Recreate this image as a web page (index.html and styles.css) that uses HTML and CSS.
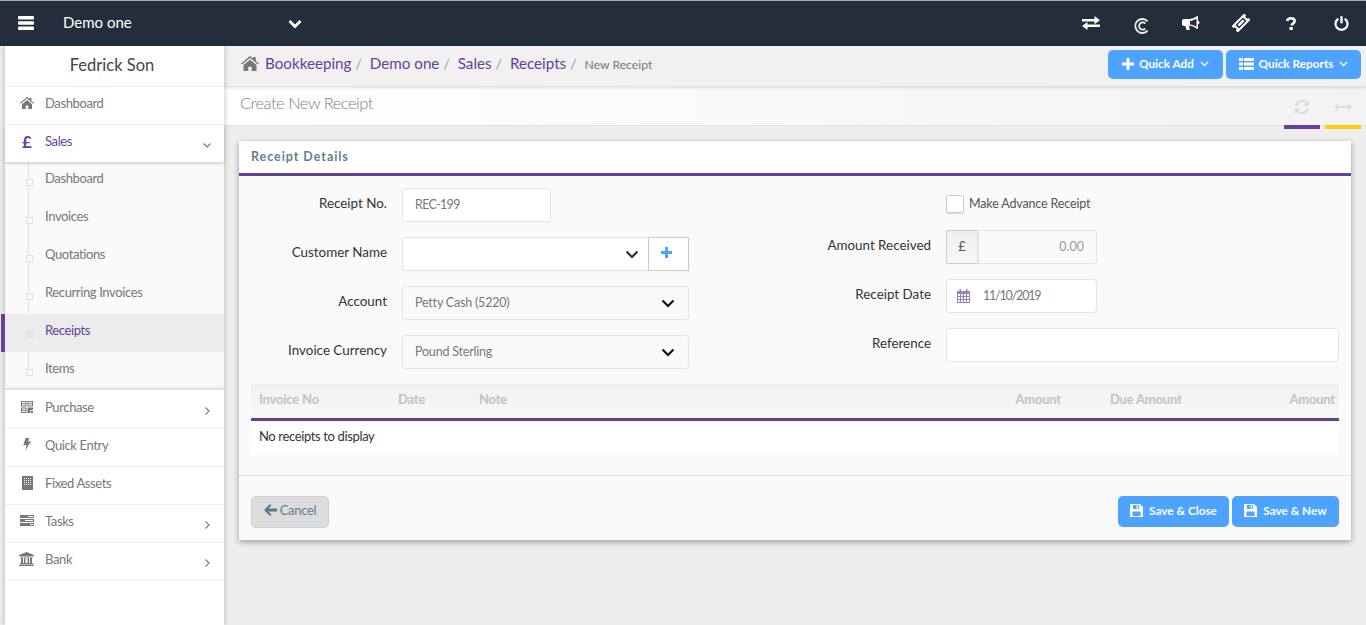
FILE: index.html
```html
<!DOCTYPE html>
<html lang="en">
<head>
<meta charset="utf-8">
<title>Create New Receipt</title>
<link rel="stylesheet" href="styles.css">
</head>
<body>
<header class="topbar">
  <button class="burger" aria-label="Menu"><svg width="16" height="14" viewBox="0 0 16 14"><path d="M1 0h14a1 1 0 0 1 1 1v1.500a1 1 0 0 1-1 1H1a1 1 0 0 1-1-1V1a1 1 0 0 1 1-1zM1 5.300h14a1 1 0 0 1 1 1v1.400a1 1 0 0 1-1 1H1a1 1 0 0 1-1-1V6.300a1 1 0 0 1 1-1zM1 10.500h14a1 1 0 0 1 1 1V13a1 1 0 0 1-1 1H1a1 1 0 0 1-1-1v-1.500a1 1 0 0 1 1-1z" fill="#fff"/></svg></button>
  <div class="company">Demo one</div>
  <svg class="company-caret" width="14" height="10" viewBox="0 0 14 10"><path d="M1.500 2l5.500 5.500L12.500 2" fill="none" stroke="#fff" stroke-width="2.800"/></svg>
  <nav class="top-icons">
    <span class="top-icon"><svg width="18" height="14" viewBox="0 0 18 14"><path d="M0 3h12.500V0L18 4.200l-5.500 4V5.500H0zM18 8.500H5.500V6L0 10l5.500 4v-3H18z" fill="#fff"/></svg></span>
    <span class="top-icon top-icon-c"><svg width="16" height="16" viewBox="0 0 16 16"><path d="M13.600 3.400A7 7 0 1 0 13.600 12.600M11.300 5.500A3.600 3.600 0 1 0 11.300 10.500" fill="none" stroke="#eee" stroke-width="1.800"/></svg></span>
    <span class="top-icon"><svg width="18" height="15" viewBox="0 0 18 15"><path d="M15 0l1 .5v4.300c1 .3 1.500.9 1.500 1.700s-.5 1.400-1.500 1.700v4.300l-1 .5c-2.500-2-5-3.200-8-3.500L7.800 14H4.500L3.400 10H2C.8 10 0 9.200 0 8V5c0-1.200.8-2 2-2h5c3 0 5.800-1 8-3zM14.500 2.500C12.800 3.800 10.500 4.700 8 5v3.500c2.500.3 4.800 1.200 6.500 2.500z" fill="#fff" fill-rule="evenodd"/></svg></span>
    <span class="top-icon"><svg width="18" height="18" viewBox="-11 -11 22 22"><g transform="rotate(-45)"><path d="M-11-5.500H11V-2.200a2.200 2.200 0 0 0 0 4.400V5.500H-11V2.200a2.200 2.200 0 0 0 0-4.400zM-6.500-3V3H6.500V-3z" fill="#fff" fill-rule="evenodd"/><path d="M-4.500-1.500H4.500V1.500H-4.500z" fill="#fff"/></g></svg></span>
    <span class="top-icon"><svg width="10" height="13" viewBox="0 0 10 13"><path d="M1.200 4C1.400 2.300 2.900 1.300 5 1.300c2.200 0 3.700 1.100 3.700 2.800 0 2.600-3 2.400-3 4.300" fill="none" stroke="#fff" stroke-width="2.500"/><rect x="3.500" y="10" width="3.200" height="3" fill="#fff"/></svg></span>
    <span class="top-icon"><svg width="15" height="15" viewBox="0 0 15 15"><path d="M4.300 2.800a6 6 0 1 0 6.400 0" fill="none" stroke="#fff" stroke-width="2.200"/><rect x="6.300" y="0" width="2.400" height="7.500" rx="1" fill="#fff"/></svg></span>
  </nav>
</header>

<div class="layout">
  <aside class="sidebar">
    <div class="user">Fedrick Son</div>
    <a class="nav-item">
      <svg class="nav-icon" width="16" height="16" viewBox="-1 -2 16 16"><path d="M7 0l2.500 2.100V.8h1.900v2.900L14 6l-.7.8L7 1.600.7 6.800 0 6zM2 7.200L7 3l5 4.200V12H8.300V8.500H5.700V12H2z" fill="#777"/></svg>
      <span>Dashboard</span>
    </a>
    <a class="nav-item nav-open">
      <span class="nav-icon pound">£</span>
      <span>Sales</span>
      <svg class="nav-caret" width="10" height="7" viewBox="0 0 10 7"><path d="M1.500 1.500L5 5l3.500-3.500" fill="none" stroke="#777" stroke-width="1.100"/></svg>
    </a>
    <div class="subnav">
      <a class="sub-item">Dashboard</a>
      <a class="sub-item">Invoices</a>
      <a class="sub-item">Quotations</a>
      <a class="sub-item">Recurring Invoices</a>
      <a class="sub-item sub-active">Receipts</a>
      <a class="sub-item">Items</a>
    </div>
    <a class="nav-item">
      <svg class="nav-icon" width="16" height="16" viewBox="-2 -2 16 16"><path d="M0 0h5.500v5.500H0zM1 1v1.300h3.500V1zM1 3.200v1.300h3.500V3.200zM6.500 0H12v5.500H6.500zM7.500 1v1.300H11V1zM7.500 3.200v1.300H11V3.200zM0 6.500h5.500V12H0zM1 7.500v1.300h3.500V7.500zM1 9.700V11h3.500V9.700zM6.500 6.500H12V9H9.500v3h-3zM10 10h2v2h-2z" fill="#777" fill-rule="evenodd"/></svg>
      <span>Purchase</span>
      <svg class="nav-caret" width="7" height="10" viewBox="0 0 7 10"><path d="M1.500 1.500L5 5 1.500 8.500" fill="none" stroke="#777" stroke-width="1.100"/></svg>
    </a>
    <a class="nav-item">
      <svg class="nav-icon" width="16" height="16" viewBox="-4 -1 16 16"><path d="M2.500 0h3.800L4.800 3.800 8 3 2.200 13l1.300-6.200L.3 7.500z" fill="#777"/></svg>
      <span>Quick Entry</span>
    </a>
    <a class="nav-item">
      <svg class="nav-icon" width="16" height="16" viewBox="-3 -1 16 16"><path d="M0 0h11v14H0zM2 2v1h1V2zM4 2v1h1V2zM6 2v1h1V2zM8 2v1h1V2zM2 4v1h1V4zM4 4v1h1V4zM6 4v1h1V4zM8 4v1h1V4zM2 6v1h1V6zM4 6v1h1V6zM6 6v1h1V6zM8 6v1h1V6zM2 8v1h1V8zM4 8v1h1V8zM6 8v1h1V8zM8 8v1h1V8z" fill="#777" fill-rule="evenodd"/></svg>
      <span>Fixed Assets</span>
    </a>
    <a class="nav-item">
      <svg class="nav-icon" width="16" height="16" viewBox="-1 -2 16 16"><path d="M0 0h14v3H0zM8 1v1h5V1zM0 4h14v3H0zM5 5v1h8V5zM0 8h14v3H0zM10 9v1h3V9z" fill="#777" fill-rule="evenodd"/></svg>
      <span>Tasks</span>
      <svg class="nav-caret" width="7" height="10" viewBox="0 0 7 10"><path d="M1.500 1.500L5 5 1.500 8.500" fill="none" stroke="#777" stroke-width="1.100"/></svg>
    </a>
    <a class="nav-item">
      <svg class="nav-icon" width="16" height="16" viewBox="0 -1 16 16"><path d="M7.500 0L15 3v1H0V3zM1 4.500h13v1H1zM2 6h2v5H2zM5 6h1.500v5H5zM8.500 6H10v5H8.500zM11 6h2v5h-2zM1 11h13v1.200H1zM0 12.700h15V14H0z" fill="#777"/></svg>
      <span>Bank</span>
      <svg class="nav-caret" width="7" height="10" viewBox="0 0 7 10"><path d="M1.500 1.500L5 5 1.500 8.500" fill="none" stroke="#777" stroke-width="1.100"/></svg>
    </a>
  </aside>

  <main class="content">
    <div class="crumbbar">
      <nav class="crumbs">
        <svg class="crumb-home" width="18" height="15" viewBox="0 0 18 15"><path d="M9 0l3.200 2.700V1h2.500v3.800L18 7.600l-.9 1L9 1.900.9 8.600 0 7.600zM2.500 9L9 3.700 15.500 9v6h-4.800v-4.300H7.300V15H2.500z" fill="#777"/></svg>
        <a class="crumb">Bookkeeping</a><span class="sep">/</span>
        <a class="crumb">Demo one</a><span class="sep">/</span>
        <a class="crumb">Sales</a><span class="sep">/</span>
        <a class="crumb">Receipts</a><span class="sep">/</span>
        <span class="crumb-now">New Receipt</span>
      </nav>
      <div class="quick">
        <button class="btn btn-quick-add">
          <svg width="12" height="12" viewBox="0 0 12 12"><path d="M4.500 0h3v4.500H12v3H7.500V12h-3V7.500H0v-3h4.500z" fill="#fff"/></svg>
          Quick Add
          <svg class="btn-caret" width="9" height="6" viewBox="0 0 9 6"><path d="M1 1l3.500 3.500L8 1" fill="none" stroke="#fff" stroke-width="1.300"/></svg>
        </button>
        <button class="btn btn-quick-rep">
          <svg width="15" height="12" viewBox="0 0 15 12"><path d="M0 0h4v3H0zM5 0h10v3H5zM0 4.500h4v3H0zM5 4.500h10v3H5zM0 9h4v3H0zM5 9h10v3H5z" fill="#fff"/></svg>
          Quick Reports
          <svg class="btn-caret" width="9" height="6" viewBox="0 0 9 6"><path d="M1 1l3.500 3.500L8 1" fill="none" stroke="#fff" stroke-width="1.300"/></svg>
        </button>
      </div>
    </div>

    <div class="titlebar">
      <h1 class="title">Create New Receipt</h1>
      <div class="title-tools">
        <span class="tool tool-purple"><svg width="18" height="18" viewBox="0 0 16 16"><path d="M2 7A6 6 0 0 1 12.500 3.500L14.500 1.500V7H9l2-2A3.800 3.800 0 0 0 4.300 7zM14 9A6 6 0 0 1 3.500 12.500L1.500 14.500V9H7L5 11A3.800 3.800 0 0 0 11.700 9z" fill="#ddd"/></svg></span>
        <span class="tool tool-yellow"><svg width="18" height="8" viewBox="0 0 18 8"><path d="M4 0v3h10V0l4 4-4 4V5H4v3L0 4z" fill="#ddd"/></svg></span>
      </div>
    </div>

    <section class="card">
      <h2 class="card-head">Receipt Details</h2>
      <div class="card-body">
        <form class="form">
          <div class="col col-left">
            <div class="row">
              <label class="label">Receipt No.</label>
              <input class="input input-short" value="REC-199">
            </div>
            <div class="row">
              <label class="label">Customer Name</label>
              <div class="combo">
                <div class="select select-white">
                  <svg class="sel-caret sel-caret-dark" width="14" height="9" viewBox="0 0 14 9"><path d="M1.500 1.500L7 7l5.500-5.500" fill="none" stroke="#333" stroke-width="2.200"/></svg>
                </div>
                <button type="button" class="add-btn" aria-label="Add"><svg width="11" height="11" viewBox="0 0 11 11"><path d="M4 0h3v4h4v3H7v4H4V7H0V4h4z" fill="#4da3ff"/></svg></button>
              </div>
            </div>
            <div class="row">
              <label class="label">Account</label>
              <div class="select">Petty Cash (5220)
                <svg class="sel-caret" width="14" height="9" viewBox="0 0 14 9"><path d="M1.500 1.500L7 7l5.500-5.500" fill="none" stroke="#111" stroke-width="2.200"/></svg>
              </div>
            </div>
            <div class="row">
              <label class="label">Invoice Currency</label>
              <div class="select">Pound Sterling
                <svg class="sel-caret" width="14" height="9" viewBox="0 0 14 9"><path d="M1.500 1.500L7 7l5.500-5.500" fill="none" stroke="#111" stroke-width="2.200"/></svg>
              </div>
            </div>
          </div>
          <div class="col col-right">
            <div class="row row-check">
              <span class="label"></span>
              <span class="checkbox"></span>
              <span class="check-text">Make Advance Receipt</span>
            </div>
            <div class="row">
              <label class="label">Amount Received</label>
              <span class="addon">£</span>
              <input class="input input-amount" value="0.00">
            </div>
            <div class="row">
              <label class="label">Receipt Date</label>
              <div class="date">
                <svg width="13" height="14" viewBox="0 0 13 14"><path d="M0 2h2.500V0h1.500v2h5V0h1.500v2H13v12H0zM1 5v2h2V5zM4 5v2h2V5zM7 5v2h2V5zM10 5v2h2V5zM1 8v2h2V8zM4 8v2h2V8zM7 8v2h2V8zM10 8v2h2V8zM1 11v2h2v-2zM4 11v2h2v-2zM7 11v2h2v-2zM10 11v2h2v-2z" fill="#9b83bd" fill-rule="evenodd"/></svg>
                <span class="date-text">11/10/2019</span>
              </div>
            </div>
            <div class="row">
              <label class="label">Reference</label>
              <input class="input input-wide">
            </div>
          </div>
        </form>

        <table class="table">
          <thead>
            <tr>
              <th class="c-no">Invoice No</th>
              <th class="c-date">Date</th>
              <th class="c-note">Note</th>
              <th class="c-amt">Amount</th>
              <th class="c-due">Due Amount</th>
              <th class="c-pay">Amount</th>
            </tr>
          </thead>
          <tbody>
            <tr><td colspan="6">No receipts to display</td></tr>
          </tbody>
        </table>
      </div>
      <div class="card-foot">
        <button class="btn-cancel">
          <svg width="13" height="12" viewBox="0 0 13 12"><path d="M6 0l1.500 1.500L4.500 4.500H13v3H4.500l3 3L6 12 0 6z" fill="#5b7a8c"/></svg>
          Cancel
        </button>
        <div class="foot-right">
          <button class="btn btn-close">
            <svg width="13" height="13" viewBox="0 0 13 13"><path d="M0 0h10l3 3v10H0zM3 1v4h6V1zM2.500 7.500V12h8V7.500zM6.500 1.500h1.500v3H6.500z" fill="#fff" fill-rule="evenodd"/></svg>
            Save &amp; Close
          </button>
          <button class="btn btn-new">
            <svg width="13" height="13" viewBox="0 0 13 13"><path d="M0 0h10l3 3v10H0zM3 1v4h6V1zM2.500 7.500V12h8V7.500zM6.500 1.500h1.500v3H6.500z" fill="#fff" fill-rule="evenodd"/></svg>
            Save &amp; New
          </button>
        </div>
      </div>
    </section>
  </main>
</div>
</body>
</html>
```

FILE: styles.css
```css
* { box-sizing: border-box; }
html, body { margin: 0; height: 625px; overflow: hidden; }
body {
  background: #eeeeee;
  font-family: "Lato", "Noto Sans", sans-serif;
  font-size: 13px;
  color: #333;
}
button { font-family: inherit; cursor: pointer; }

/* top bar */
.topbar {
  height: 46px;
  background: #232d3b;
  border-top: 1px solid #a9a9a9;
  display: flex;
  align-items: center;
  color: #fff;
}
.burger {
  width: 16px; height: 14px; padding: 0; margin: 0 0 1px 18px;
  background: none; border: 0; display: flex;
}
.company { margin-left: 29px; width: 225px; font-size: 15px; padding-bottom: 3px; }
.company-caret { margin-bottom: -1px; }
.top-icons { margin-left: auto; display: flex; }
.top-icon { width: 50px; height: 46px; display: flex; align-items: center; justify-content: center; padding-bottom: 1px; }
.top-icon-c { padding: 5px 0 0 2px; }

/* layout */
.layout { display: flex; height: 579px; }
.sidebar {
  width: 219px;
  margin-left: 5px;
  background: #fff;
  box-shadow: 0 0 6px rgba(0,0,0,.25);
  position: relative;
  z-index: 2;
  flex: none;
}
.user {
  height: 41px;
  border-bottom: 1px solid #f0f0f0;
  text-align: center;
  font-size: 16.500px;
  line-height: 38px;
  color: #444;
  padding-right: 5px;
}
.nav-item {
  height: 38px;
  border-bottom: 1px solid #f0f0f0;
  display: flex;
  align-items: center;
  color: #777;
  position: relative;
  padding: 0 0 5px 14px;
  line-height: 1;
  letter-spacing: -.38px;
}
.nav-icon { flex: none; width: 16px; margin-right: 10px; text-align: center; }
.pound { font-size: 17px; font-weight: 700; color: #663f9a; letter-spacing: 0; }
.nav-open { color: #663f9a; border-bottom: 0; box-shadow: 0 2px 3px rgba(0,0,0,.15); z-index: 1; height: 37px; }
.nav-caret { position: absolute; right: 13px; top: 15px; }
.nav-open .nav-caret { right: 12px; top: 17px; }
.subnav { background: #fafafa; position: relative; margin-bottom: 1px; box-shadow: inset 0 -3px 3px -1px rgba(0,0,0,.12); }
.subnav::before {
  content: ""; position: absolute; left: 23px; top: 0; bottom: 20px; width: 1px; background: #e3e3e3;
}
.sub-item {
  display: block;
  height: 38px;
  padding-left: 40px;
  line-height: 32px;
  color: #777;
  position: relative;
  letter-spacing: -.38px;
}
.sub-item::before {
  content: ""; position: absolute; left: 21px; top: 17px; width: 5px; height: 5px;
  background: #fafafa; border: 1px solid #e0e0e0;
}
.sub-active { background: #ececec; color: #663f9a; }
.sub-active::before { background: #e3e3e3; }
.sub-active::after {
  content: ""; position: absolute; left: -4px; top: 0; bottom: 0; width: 4px; background: #663f9a;
}

/* content */
.content { flex: 1; min-width: 0; }
.crumbbar {
  height: 40px;
  background: #f1f1f1;
  box-shadow: 0 1px 4px rgba(0,0,0,.18);
  display: flex;
  align-items: flex-start;
  justify-content: space-between;
  padding: 4px 5px 0 17px;
  position: relative;
  z-index: 1;
}
.crumbs { display: flex; align-items: center; height: 26px; }
.crumb-home { margin-right: 6px; margin-top: 1px; }
.crumb { font-size: 15.200px; color: #663f9a; }
.sep { color: #999; margin: 0 8px 0 4px; font-size: 14px; }
.crumb-now { font-size: 12.200px; color: #777; padding-top: 2px; }
.quick { display: flex; gap: 3px; }
.btn {
  background: #4da3ff;
  border: 0;
  border-radius: 5px;
  color: #fff;
  font-size: 11.800px;
  font-weight: 700;
  display: flex;
  align-items: center;
  justify-content: center;
  gap: 5px;
  padding: 0 0 2px;
}
.btn-quick-add { width: 115px; height: 29px; }
.btn-quick-rep { width: 135px; height: 29px; }
.btn-caret { margin-left: 1px; }

.titlebar {
  height: 40px;
  background: linear-gradient(90deg, #fff, #f3f3f3);
  border-bottom: 1px solid #e3e3e3;
  display: flex;
  justify-content: space-between;
  padding-left: 16px;
}
.title { margin: 0; font-size: 16.500px; font-weight: 300; color: #808080; line-height: 34px; letter-spacing: -.5px; }
.title-tools { display: flex; gap: 5px; padding-right: 5px; }
.tool {
  width: 36px; height: 43px; display: flex; align-items: center; justify-content: center;
  border-bottom: 4px solid;
}
.tool svg { margin-top: 2px; }
.tool-purple { border-color: #663f9a; }
.tool-yellow { border-color: #ffce0a; }

/* card */
.card {
  margin: 15px 15px 0 15px;
  width: 1112px;
  height: 399px;
  background: #fafafa;
  box-shadow: 0 2px 6px rgba(0,0,0,.35);
}
.card-head {
  margin: 0;
  height: 35px;
  background: #fff;
  border-bottom: 3px solid #663f9a;
  font-size: 12.500px;
  font-weight: 700;
  letter-spacing: .95px;
  color: #5f7f90;
  padding-left: 12px;
  line-height: 32px;
}
.card-body { height: 300px; border-bottom: 1px solid #e3e3e3; padding: 0 12px; }
.form { display: flex; height: 208px; margin-left: -12px; }
.col { display: flex; flex-direction: column; gap: 15px; }
.col-left { width: 450px; padding-top: 12px; }
.col-right { margin-left: 92px; padding-top: 5px; flex: 1; }
.row { display: flex; align-items: center; height: 34px; }
.row-check { padding-top: 12px; }
.label {
  flex: none;
  width: 148px;
  margin-right: 15px;
  text-align: right;
  color: #333;
  font-size: 13.400px;
  padding-bottom: 4px;
}
.col-right .label { width: 150px; }
.input {
  height: 34px;
  border: 1px solid #e4e4e4;
  border-radius: 3px;
  background: #fff;
  padding: 0 12px 2px;
  font: inherit;
  font-size: 12.500px;
  color: #777;
  outline: 0;
}
.input-short { width: 149px; letter-spacing: -.7px; }
.input-amount { width: 119px; border-radius: 0 3px 3px 0; text-align: right; background: #fafafa; color: #999; }
.input-wide { width: 393px; }
.combo { display: flex; width: 287px; }
.select {
  flex: 1;
  height: 34px;
  width: 287px;
  border: 1px solid #e4e4e4;
  border-radius: 3px;
  background: #fafafa;
  padding: 0 12px 2px;
  color: #777;
  font-size: 12.500px;
  letter-spacing: -.2px;
  display: flex;
  align-items: center;
  position: relative;
}
.select-white { background: #fff; border-radius: 3px 0 0 3px; border-right: 0; }
.sel-caret { position: absolute; right: 13px; top: 12px; }
.sel-caret-dark { right: 9px; }
.add-btn {
  width: 41px; height: 34px; padding: 0 4px 3px 0; background: #fff; border: 1px solid #c9c9c9;
  display: flex; align-items: center; justify-content: center;
}
.checkbox {
  width: 18px; height: 18px; border: 1px solid #ccc; border-radius: 2px; background: #fff;
  box-shadow: 0 1px 1px rgba(0,0,0,.12); margin-right: 5px; flex: none;
}
.check-text { padding-bottom: 2px; color: #555; font-size: 12.500px; letter-spacing: -.15px; }
.addon {
  width: 32px; height: 34px; border: 1px solid #ccc; background: linear-gradient(#efefef,#f7f7f7);
  display: flex; align-items: center; justify-content: center; color: #555; padding-bottom: 3px; flex: none;
  border-right-color: #e4e4e4; border-radius: 3px 0 0 3px;
}
.date {
  width: 151px; height: 34px; border: 1px solid #e4e4e4; border-radius: 3px; background: #fff;
  display: flex; align-items: center; gap: 13px; padding: 0 0 0 10px; font-size: 12.500px; color: #777;
}
.date-text { letter-spacing: -1.200px; padding-bottom: 2px; }

/* table */
.table { width: 1088px; border-collapse: collapse; table-layout: fixed; }
.table th {
  height: 30px;
  background: linear-gradient(#f1f1f1, #f8f8f8);
  border-bottom: 3px solid #663f9a;
  color: #c0c2c6;
  font-size: 13px;
  font-weight: 700;
  letter-spacing: -.2px;
  text-align: left;
  padding: 0 0 4px 0;
  box-sizing: content-box;
}
.table td { height: 35px; background: #fff; padding: 0 8px 3px; color: #333; letter-spacing: -.36px; }
.c-no { width: 139px; padding-left: 8px !important; }
.c-date { width: 81px; }
.c-note { width: 490px; }
.c-amt { width: 92px; text-align: right !important; padding-right: 0 !important; }
.c-due { width: 130px; padding-left: 49px !important; }
.c-pay { text-align: right !important; padding-right: 4px !important; }

.card-foot { display: flex; justify-content: space-between; padding: 20px 12px 0; }
.btn-cancel {
  width: 78px; height: 32px; background: #dddddd; border: 1px solid #cfcfcf; border-radius: 5px;
  color: #5f7f90; font-size: 13px; letter-spacing: -.3px; display: flex; align-items: center; justify-content: center; gap: 3px; padding: 0 0 4px;
}
.foot-right { display: flex; gap: 3px; }
.btn-close { width: 111px; height: 31px; gap: 6px; }
.btn-new { width: 107px; height: 31px; gap: 6px; }
```
